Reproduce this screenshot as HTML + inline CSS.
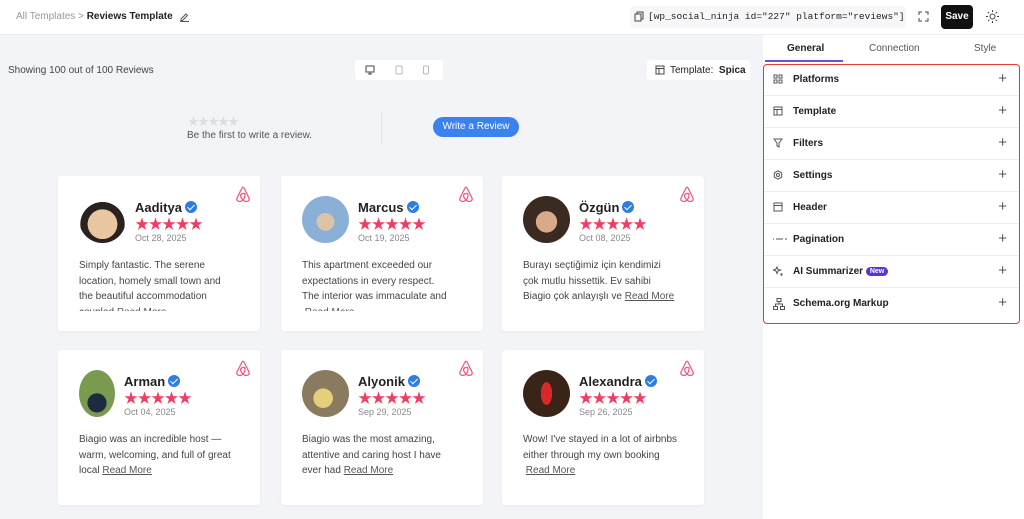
<!DOCTYPE html>
<html><head><meta charset="utf-8"><style>
*{margin:0;padding:0;box-sizing:border-box}
body{width:1024px;height:519px;overflow:hidden;font-family:"Liberation Sans","Noto Sans CJK JP",sans-serif;background:#fff;position:relative;color:#222}
.a{position:absolute}
.main{left:0;top:35px;width:763px;height:484px;background:#f3f4f8}
.card{position:absolute;background:#fff;width:202px;height:155px;border-radius:3px;box-shadow:0 1px 3px rgba(0,0,0,.04)}
.av{position:absolute;left:21px;top:20px;width:47px;height:47px;border-radius:50%}
.nm{position:absolute;left:77px;top:24px;font-size:13px;font-weight:bold;color:#222;white-space:nowrap}
.ck{display:inline-block;width:12px;height:12px;border-radius:50%;background:#2f7de1;vertical-align:-1px;margin-left:3px;position:relative}
.ck:after{content:"";position:absolute;left:4px;top:2px;width:3px;height:6px;border:solid #fff;border-width:0 1.6px 1.6px 0;transform:rotate(45deg)}
.st{position:absolute;left:77px;top:38px;color:#f23d63;font-size:14px;letter-spacing:-0.5px}
.dt{position:absolute;left:77px;top:57px;font-size:9px;color:#888}
.tx{position:absolute;left:21px;top:82px;width:152px;font-size:10px;line-height:15.5px;color:#444;max-height:47px;overflow:hidden}
.tx u{color:#555}
.ab{position:absolute;right:10px;top:10px}
.row{position:absolute;left:764px;width:255px;height:32px;border-bottom:1px solid #ececec;font-size:10px;font-weight:bold;color:#222}
.row span.l{position:absolute;left:29px;top:10px}
.row span.p{position:absolute;right:12px;top:6px;font-size:15px;font-weight:normal;color:#555}
.row svg{position:absolute;left:9px;top:10px}
</style></head><body>
<div class="a" style="left:16px;top:11px;font-size:10px;color:#999">All Templates &gt; <b style="color:#222">Reviews Template</b></div>
<svg class="a" style="left:179px;top:11px" width="11" height="11" viewBox="0 0 11 11" fill="none" stroke="#555" stroke-width="1"><path d="M2 8l5-5 1.5 1.5-5 5H2zM1 10.5h9"/></svg>
<div class="a" style="left:630px;top:6px;width:276px;height:22px;background:#f7f7f9;border-radius:3px"></div>
<svg class="a" style="left:634px;top:11px" width="10" height="11" fill="none" stroke="#444"><rect x="1" y="3" width="6" height="7"/><path d="M3 3V1h6v7H7"/></svg>
<div class="a" style="left:648px;top:11px;font-family:'Liberation Mono',monospace;font-size:9.5px;color:#222">[wp_social_ninja id="227" platform="reviews"]</div>
<svg class="a" style="left:918px;top:11px" width="11" height="11" fill="none" stroke="#444"><path d="M1 4V1h3M7 1h3v3M10 7v3H7M4 10H1V7"/></svg>
<div class="a" style="left:941px;top:5px;width:32px;height:24px;background:#111;border-radius:4px;color:#fff;font-size:10px;font-weight:bold;text-align:center;line-height:24px">Save</div>
<svg class="a" style="left:986px;top:10px" width="13" height="13" fill="none" stroke="#444"><circle cx="6.5" cy="6.5" r="2.5"/><path d="M6.5 0v2M6.5 11v2M0 6.5h2M11 6.5h2M2 2l1.3 1.3M9.7 9.7L11 11M2 11l1.3-1.3M9.7 3.3L11 2"/></svg>
<div class="a" style="left:0;top:34px;width:1024px;height:1px;background:#eee"></div>

<div class="a main"></div>
<div class="a" style="left:8px;top:65px;font-size:10px;color:#444">Showing 100 out of 100 Reviews</div>
<div class="a" style="left:355px;top:60px;width:88px;height:20px;background:#fff;border-radius:3px"></div>
<svg class="a" style="left:365px;top:65px" width="10" height="10" fill="none" stroke="#444"><rect x="1" y="1" width="8" height="6"/><path d="M5 7v2M3 9h4"/></svg>
<svg class="a" style="left:395px;top:65px" width="8" height="10" fill="none" stroke="#bbb"><rect x="1" y="1" width="6" height="8" rx="1"/></svg>
<svg class="a" style="left:422px;top:65px" width="8" height="10" fill="none" stroke="#bbb"><rect x="1.5" y="1" width="5" height="8" rx="1"/></svg>
<div class="a" style="left:647px;top:60px;width:103px;height:20px;background:#fff;border-radius:3px"></div>
<svg class="a" style="left:655px;top:65px" width="10" height="10" fill="none" stroke="#444"><rect x="1" y="1" width="8" height="8"/><path d="M1 3.5h8M4 3.5V9"/></svg>
<div class="a" style="left:670px;top:65px;font-size:10px;color:#222">Template:&nbsp; <b>Spica</b></div>

<div class="a" style="left:188px;top:113px;font-size:11px;color:#ddd;letter-spacing:-1px">★★★★★</div>
<div class="a" style="left:187px;top:130px;font-size:10px;color:#555">Be the first to write a review.</div>
<div class="a" style="left:381px;top:112px;width:1px;height:32px;background:#e6e6ea"></div>
<div class="a" style="left:433px;top:117px;width:86px;height:20px;background:#3b82f0;border-radius:10px;color:#fff;font-size:10px;text-align:center;line-height:20px">Write a Review</div>

<div class="card" style="left:58px;top:176px">
<div class="av" style="background:radial-gradient(circle at 50% 60%,#e9c6a0 0 40%,#2a2220 41% 60%,#fff 61%)"></div>
<div class="nm">Aaditya<span class="ck"></span></div><div class="st">★★★★★</div><div class="dt">Oct 28, 2025</div>
<div class="tx" style="max-height:53px">Simply fantastic. The serene location, homely small town and the beautiful accommodation coupled <u>Read More</u></div>
<svg class="ab" width="14" height="16" viewBox="0 0 14 16" fill="none" stroke="#f0557a" stroke-width="1.2"><path d="M7 14c-3 3-7 1-6-2L6 2c.5-1 1.5-1 2 0l5 10c1 3-3 5-6 2zM7 14c-2-2-3-4-2-5.5S9 7 9 8.5 9 12 7 14z"/></svg></div>
<div class="card" style="left:281px;top:176px">
<div class="av" style="background:radial-gradient(circle at 50% 55%,#d9c4a8 0 25%,#8ab0d8 26%)"></div>
<div class="nm">Marcus<span class="ck"></span></div><div class="st">★★★★★</div><div class="dt">Oct 19, 2025</div>
<div class="tx" style="max-height:53px">This apartment exceeded our expectations in every respect. The interior was immaculate and &nbsp;<u>Read More</u></div>
<svg class="ab" width="14" height="16" viewBox="0 0 14 16" fill="none" stroke="#f0557a" stroke-width="1.2"><path d="M7 14c-3 3-7 1-6-2L6 2c.5-1 1.5-1 2 0l5 10c1 3-3 5-6 2zM7 14c-2-2-3-4-2-5.5S9 7 9 8.5 9 12 7 14z"/></svg></div>
<div class="card" style="left:502px;top:176px">
<div class="av" style="background:radial-gradient(circle at 50% 55%,#d9a98a 0 30%,#3a2a22 31%)"></div>
<div class="nm">Özgün<span class="ck"></span></div><div class="st">★★★★★</div><div class="dt">Oct 08, 2025</div>
<div class="tx">Burayı seçtiğimiz için kendimizi çok mutlu hissettik. Ev sahibi Biagio çok anlayışlı ve <u>Read More</u></div>
<svg class="ab" width="14" height="16" viewBox="0 0 14 16" fill="none" stroke="#f0557a" stroke-width="1.2"><path d="M7 14c-3 3-7 1-6-2L6 2c.5-1 1.5-1 2 0l5 10c1 3-3 5-6 2zM7 14c-2-2-3-4-2-5.5S9 7 9 8.5 9 12 7 14z"/></svg></div>

<div class="card" style="left:58px;top:350px">
<div class="av" style="width:36px;background:radial-gradient(circle at 50% 70%,#1e2a40 0 25%,#7a9a50 26%)"></div>
<div class="nm" style="left:66px">Arman<span class="ck"></span></div><div class="st" style="left:66px">★★★★★</div><div class="dt" style="left:66px">Oct 04, 2025</div>
<div class="tx">Biagio was an incredible host — warm, welcoming, and full of great local <u>Read More</u></div>
<svg class="ab" width="14" height="16" viewBox="0 0 14 16" fill="none" stroke="#f0557a" stroke-width="1.2"><path d="M7 14c-3 3-7 1-6-2L6 2c.5-1 1.5-1 2 0l5 10c1 3-3 5-6 2zM7 14c-2-2-3-4-2-5.5S9 7 9 8.5 9 12 7 14z"/></svg></div>
<div class="card" style="left:281px;top:350px">
<div class="av" style="background:radial-gradient(circle at 45% 60%,#e4d07a 0 25%,#8a7a60 26%)"></div>
<div class="nm">Alyonik<span class="ck"></span></div><div class="st">★★★★★</div><div class="dt">Sep 29, 2025</div>
<div class="tx">Biagio was the most amazing, attentive and caring host I have ever had <u>Read More</u></div>
<svg class="ab" width="14" height="16" viewBox="0 0 14 16" fill="none" stroke="#f0557a" stroke-width="1.2"><path d="M7 14c-3 3-7 1-6-2L6 2c.5-1 1.5-1 2 0l5 10c1 3-3 5-6 2zM7 14c-2-2-3-4-2-5.5S9 7 9 8.5 9 12 7 14z"/></svg></div>
<div class="card" style="left:502px;top:350px">
<div class="av" style="background:radial-gradient(ellipse 20% 40% at 50% 50%,#d9282a 0 60%,#3a2418 61%)"></div>
<div class="nm">Alexandra<span class="ck"></span></div><div class="st">★★★★★</div><div class="dt">Sep 26, 2025</div>
<div class="tx" style="width:175px;white-space:nowrap">Wow! I've stayed in a lot of airbnbs<br>either through my own booking<br>&nbsp;<u>Read More</u></div>
<svg class="ab" width="14" height="16" viewBox="0 0 14 16" fill="none" stroke="#f0557a" stroke-width="1.2"><path d="M7 14c-3 3-7 1-6-2L6 2c.5-1 1.5-1 2 0l5 10c1 3-3 5-6 2zM7 14c-2-2-3-4-2-5.5S9 7 9 8.5 9 12 7 14z"/></svg></div>

<div class="a" style="left:787px;top:43px;font-size:10px;font-weight:bold;color:#222">General</div>
<div class="a" style="left:869px;top:43px;font-size:10px;color:#555">Connection</div>
<div class="a" style="left:974px;top:43px;font-size:10px;color:#555">Style</div>
<div class="a" style="left:765px;top:60px;width:78px;height:2px;background:#6b4fe0"></div>
<div class="a" style="left:763px;top:64px;width:257px;height:260px;border:1.5px solid #e53935;border-radius:4px"></div>

<div class="row" style="top:64px"><svg width="10" height="10" fill="none" stroke="#555"><rect x="1" y="1" width="3" height="3"/><rect x="6" y="1" width="3" height="3"/><rect x="1" y="6" width="3" height="3"/><rect x="6" y="6" width="3" height="3"/></svg><span class="l">Platforms</span><span class="p">+</span></div>
<div class="row" style="top:96px"><svg width="10" height="10" fill="none" stroke="#555"><rect x="1" y="1" width="8" height="8"/><path d="M1 3.5h8M4 3.5V9"/></svg><span class="l">Template</span><span class="p">+</span></div>
<div class="row" style="top:128px"><svg width="10" height="10" fill="none" stroke="#555"><path d="M1 1h8L6 5v4L4 8V5z"/></svg><span class="l">Filters</span><span class="p">+</span></div>
<div class="row" style="top:160px"><svg width="10" height="10" fill="none" stroke="#555"><path d="M5 .8l3.7 2.1v4.2L5 9.2 1.3 7.1V2.9z"/><circle cx="5" cy="5" r="1.5"/></svg><span class="l">Settings</span><span class="p">+</span></div>
<div class="row" style="top:192px"><svg width="10" height="10" fill="none" stroke="#555"><rect x="1" y="1" width="8" height="8"/><path d="M1 3.5h8"/></svg><span class="l">Header</span><span class="p">+</span></div>
<div class="row" style="top:224px"><svg width="14" height="10" fill="none" stroke="#555"><path d="M0 5h1M3 5h7M12 5h2"/></svg><span class="l">Pagination</span><span class="p">+</span></div>
<div class="row" style="top:256px"><svg width="10" height="10" fill="none" stroke="#555"><path d="M4 1l1 2.5L7.5 4 5 5 4 7.5 3 5 .5 4 3 3z"/><circle cx="8.5" cy="8.5" r=".7"/></svg><span class="l">AI Summarizer <span style="display:inline-block;background:#5b34d8;color:#fff;font-size:7px;border-radius:5px;padding:1px 4px;vertical-align:1px">New</span></span><span class="p">+</span></div>
<div class="row" style="top:288px;border-bottom:none"><svg width="12" height="12" fill="none" stroke="#555"><rect x="4" y="0.5" width="4" height="3"/><rect x="0.5" y="8.5" width="4" height="3"/><rect x="7.5" y="8.5" width="4" height="3"/><path d="M6 3.5v2.5M2.5 8.5V6h7v2.5"/></svg><span class="l">Schema.org Markup</span><span class="p">+</span></div>
</body></html>
